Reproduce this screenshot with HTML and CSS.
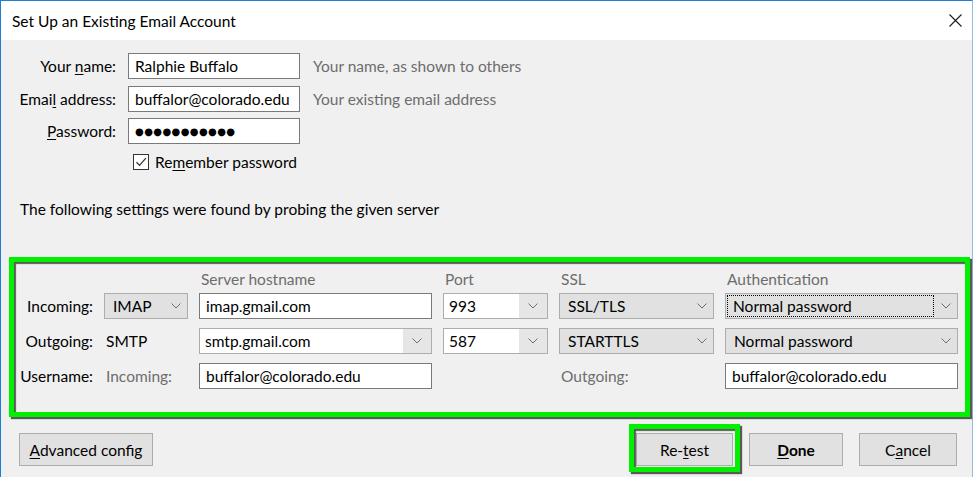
FILE: index.html
```html
<!DOCTYPE html>
<html lang="en">
<head>
<meta charset="utf-8">
<title>Set Up an Existing Email Account</title>
<link rel="stylesheet" href="styles.css">
</head>
<body>
<div class="window">
  <header class="titlebar">
    <span class="title">Set Up an Existing Email Account</span>
    <svg class="close" width="13" height="13" viewBox="0 0 13 13"><path d="M0.5 0.5 L12.5 12.5 M12.5 0.5 L0.5 12.5" stroke="#1b1b1b" stroke-width="1.1" fill="none"/></svg>
  </header>
  <main class="content">
    <div class="identity">
      <span class="lbl">Your <u>n</u>ame:</span>
      <div class="field">Ralphie Buffalo</div>
      <span class="hint">Your name, as shown to others</span>
      <span class="lbl">Emai<u>l</u> address:</span>
      <div class="field">buffalor@colorado.edu</div>
      <span class="hint">Your existing email address</span>
      <span class="lbl"><u>P</u>assword:</span>
      <div class="field pw">●●●●●●●●●●●</div>
      <span></span>
    </div>
    <div class="remember">
      <span class="checkbox"><svg width="14" height="14" viewBox="0 0 14 14"><path d="M2.5 7.2 L5.6 10.4 L11.8 3.2" stroke="#333" stroke-width="1.3" fill="none"/></svg></span>
      <span>Re<u>m</u>ember password</span>
    </div>

    <p class="found">The following settings were found by probing the given server</p>

    <section class="highlight">
      <div class="servers head">
        <span></span><span></span>
        <span class="colhead">Server hostname</span>
        <span class="colhead">Port</span>
        <span class="colhead">SSL</span>
        <span class="colhead">Authentication</span>
      </div>
      <div class="servers rows">
        <span class="rowlbl">Incoming:</span>
        <div class="select"><span class="sval">IMAP</span><svg class="chev" width="10" height="6" viewBox="0 0 10 6"><path d="M0.5 0.5 L5 5 L9.5 0.5" stroke="#6e6e6e" fill="none"/></svg></div>
        <div class="field">imap.gmail.com</div>
        <div class="combo"><span class="cval">993</span><span class="arrow"><svg class="chev" width="10" height="6" viewBox="0 0 10 6"><path d="M0.5 0.5 L5 5 L9.5 0.5" stroke="#6e6e6e" fill="none"/></svg></span></div>
        <div class="select"><span class="sval">SSL/TLS</span><svg class="chev" width="10" height="6" viewBox="0 0 10 6"><path d="M0.5 0.5 L5 5 L9.5 0.5" stroke="#6e6e6e" fill="none"/></svg></div>
        <div class="select focused"><span class="sval focusrect">Normal password</span><svg class="chev" width="10" height="6" viewBox="0 0 10 6"><path d="M0.5 0.5 L5 5 L9.5 0.5" stroke="#6e6e6e" fill="none"/></svg></div>

        <span class="rowlbl">Outgoing:</span>
        <span class="plain">SMTP</span>
        <div class="combo"><span class="cval">smtp.gmail.com</span><span class="arrow"><svg class="chev" width="10" height="6" viewBox="0 0 10 6"><path d="M0.5 0.5 L5 5 L9.5 0.5" stroke="#6e6e6e" fill="none"/></svg></span></div>
        <div class="combo"><span class="cval">587</span><span class="arrow"><svg class="chev" width="10" height="6" viewBox="0 0 10 6"><path d="M0.5 0.5 L5 5 L9.5 0.5" stroke="#6e6e6e" fill="none"/></svg></span></div>
        <div class="select"><span class="sval">STARTTLS</span><svg class="chev" width="10" height="6" viewBox="0 0 10 6"><path d="M0.5 0.5 L5 5 L9.5 0.5" stroke="#6e6e6e" fill="none"/></svg></div>
        <div class="select"><span class="sval">Normal password</span><svg class="chev" width="10" height="6" viewBox="0 0 10 6"><path d="M0.5 0.5 L5 5 L9.5 0.5" stroke="#6e6e6e" fill="none"/></svg></div>

        <span class="rowlbl">Username:</span>
        <span class="plain muted">Incoming:</span>
        <div class="field">buffalor@colorado.edu</div>
        <span></span>
        <span class="plain muted">Outgoing:</span>
        <div class="field">buffalor@colorado.edu</div>
      </div>
    </section>

    <footer class="buttons">
      <button class="btn advanced"><u>A</u>dvanced config</button>
      <span class="spacer"></span>
      <button class="btn retest">Re-<u>t</u>est</button>
      <button class="btn done"><u>D</u>one</button>
      <button class="btn cancel">C<u>a</u>ncel</button>
    </footer>
  </main>
</div>
</body>
</html>
```

FILE: styles.css
```css
* { box-sizing: border-box; }
html, body { margin: 0; padding: 0; }
body {
  width: 974px;
  height: 477px;
  overflow: hidden;
  background: #ffffff;
  font-family: Lato, "Segoe UI", "Noto Sans", sans-serif;
  font-size: 15.5px;
  color: #000;
}
u { text-decoration: underline; text-underline-offset: 2px; text-decoration-thickness: 1px; }

.window {
  width: 973px;
  height: 477px;
  border-top: 1px solid #1c7fd6;
  border-left: 1px solid #1c7fd6;
  border-right: 1px solid #8fbbe6;
  background: #f0f0f0;
  display: flex;
  flex-direction: column;
}

.titlebar {
  height: 39px;
  background: #fff;
  display: flex;
  align-items: center;
  justify-content: space-between;
  padding: 0 10px 0 11px;
  flex: none;
}
.title { font-size: 15.5px; }

.content { flex: 1; display: flex; flex-direction: column; }

/* identity block */
.identity {
  margin-top: 13px;
  display: grid;
  grid-template-columns: 107px 172px auto;
  grid-template-rows: 26px 26px 26px;
  column-gap: 12px;
  row-gap: 6.5px;
  align-items: center;
  margin-left: 8px;
}
.identity > .hint { margin-left: 1px; }
.lbl { text-align: right; white-space: nowrap; }
.hint { color: #6d6d6d; white-space: nowrap; }

.field {
  height: 26px;
  background: #fff;
  border: 1px solid #7a7a7a;
  padding: 0 6px;
  display: flex;
  align-items: center;
  white-space: nowrap;
  overflow: hidden;
}
.field.pw {
  font-family: "DejaVu Sans", sans-serif;
  font-size: 10px;
  letter-spacing: 0.4px;
  padding-left: 6px;
}

.remember {
  display: flex;
  align-items: center;
  gap: 6px;
  margin: 10px 0 0 132px;
  height: 16px;
}
.checkbox {
  width: 16px; height: 16px;
  border: 1px solid #333;
  background: #fff;
  display: flex; align-items: center; justify-content: center;
  flex: none;
}

.found { margin: 29px 0 0 19px; line-height: 20px; }

/* green highlighted group */
.highlight {
  margin: 38px 0 0 8px;
  width: 961px;
  height: 160px;
  border: 5px solid #00f000;
  box-shadow: 2px 2px 1px rgba(40,40,40,0.75), inset 2px 2px 1px rgba(40,40,40,0.75);
  padding: 8px 0 0 0;
}
.servers {
  display: grid;
  grid-template-columns: 79px 84px 233px 105px 155px 233px;
  column-gap: 11px;
}
.head { height: 18px; align-items: center; margin-bottom: 5px; }
.colhead { color: #6d6d6d; padding-left: 2px; line-height: 18px; white-space: nowrap; }
.rows { grid-auto-rows: 26px; row-gap: 9px; align-items: center; }
.rowlbl { text-align: right; white-space: nowrap; }
.plain { padding-left: 2px; white-space: nowrap; }
.muted { color: #6d6d6d; }

.select {
  height: 26px;
  background: #e1e1e1;
  border: 1px solid #adadad;
  display: flex;
  align-items: center;
  justify-content: space-between;
  padding: 0 6px 0 8px;
  white-space: nowrap;
}
.select.focused { padding-left: 2px; }
.focusrect {
  flex: 1;
  height: 20px;
  display: flex; align-items: center;
  padding-left: 5px;
  outline: 1px dotted #000;
  margin-right: 8px;
}
.chev { flex: none; }

.combo {
  height: 26px;
  border: 1px solid #adadad;
  background: #fff;
  display: flex;
  align-items: stretch;
}
.cval { flex: 1; display: flex; align-items: center; padding-left: 5px; white-space: nowrap; overflow: hidden; }
.arrow {
  width: 28px;
  background: #e6e6e6;
  display: flex; align-items: center; justify-content: center;
  flex: none;
}

/* buttons */
.buttons {
  margin-top: 16px;
  display: flex;
  align-items: center;
  padding: 0 15px 0 18px;
  gap: 16px;
}
.spacer { flex: 1; }
.btn {
  height: 33px;
  background: #e1e1e1;
  border: 1px solid #adadad;
  font-family: inherit;
  font-size: 15.5px;
  color: #000;
  padding: 0;
  position: relative;
}
.advanced { width: 134px; }
.retest { width: 97px; }
.done { width: 94px; font-weight: bold; }
.cancel { width: 98px; }
.retest::after {
  content: "";
  position: absolute;
  left: -8px; top: -10px; right: -8px; bottom: -7px;
  border: 5px solid #00f000;
  box-shadow: 2px 2px 1px rgba(40,40,40,0.75), inset 2px 2px 1px rgba(40,40,40,0.75);
}
```
